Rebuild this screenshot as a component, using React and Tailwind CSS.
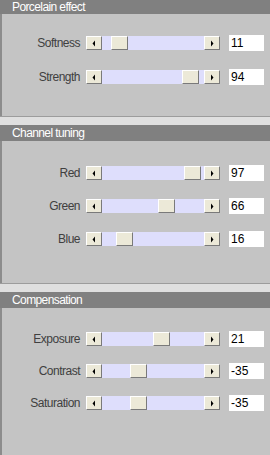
import React from "react";

const sections = [
  {
    title: "Porcelain effect",
    first: true,
    pad: "pt-[22px] gap-[20px] h-[102px]",
    rows: [
      { label: "Softness", value: 11, min: 0, max: 100 },
      { label: "Strength", value: 94, min: 0, max: 100 },
    ],
  },
  {
    title: "Channel tuning",
    pad: "pt-[25px] gap-[19px] h-[142px]",
    rows: [
      { label: "Red", value: 97, min: 0, max: 100 },
      { label: "Green", value: 66, min: 0, max: 100 },
      { label: "Blue", value: 16, min: 0, max: 100 },
    ],
  },
  {
    title: "Compensation",
    pad: "pt-[24px] gap-[18px] flex-1",
    rows: [
      { label: "Exposure", value: 21, min: -100, max: 100 },
      { label: "Contrast", value: -35, min: -100, max: 100 },
      { label: "Saturation", value: -35, min: -100, max: 100 },
    ],
  },
];

function ArrowButton({ dir }) {
  return (
    <div className="flex h-[14px] w-[16px] shrink-0 items-center justify-center border border-t-white border-l-white border-b-[#7a7a7a] border-r-[#7a7a7a] bg-[#ece9d8]">
      <svg width="4" height="7" viewBox="0 0 4 7">
        {dir === "left" ? (
          <path d="M3 0.5 L0.5 3.5 L3 6.5 Z" fill="#000" />
        ) : (
          <path d="M1 0.5 L3.5 3.5 L1 6.5 Z" fill="#000" />
        )}
      </svg>
    </div>
  );
}

function Slider({ value, min, max }) {
  const frac = (value - min) / (max - min);
  return (
    <div className="flex h-[14px] w-[134px] items-center">
      <ArrowButton dir="left" />
      <div className="relative h-[14px] flex-1 bg-[#dedefc]">
        <div
          className="absolute top-0 h-[14px] w-[17px] border border-t-white border-l-white border-b-[#7a7a7a] border-r-[#7a7a7a] bg-[#ece9d8]"
          style={{ left: Math.round(85 * frac) }}
        />
      </div>
      <ArrowButton dir="right" />
    </div>
  );
}

function Row({ label, value, min, max }) {
  return (
    <div className="flex h-[14px] items-center">
      <div className="w-[78px] text-right text-[12px] leading-[14px] tracking-[-0.5px] text-[#404040]">{label}</div>
      <div className="ml-[6px]">
        <Slider value={value} min={min} max={max} />
      </div>
      <div className="ml-[9px] flex h-[16px] w-[35px] items-center bg-white pl-[2px] text-[12px] leading-[16px] text-black">
        {value}
      </div>
    </div>
  );
}

export default function App() {
  return (
    <div
      className="flex h-[455px] w-[270px] flex-col overflow-hidden bg-[#c4c4c4]"
      style={{ fontFamily: '"Liberation Sans", Arial, sans-serif' }}
    >
      {sections.map((s) => (
        <React.Fragment key={s.title}>
          {!s.first && <div className="h-[9px] shrink-0 border-t border-[#9c9c9c] bg-[#dfdfdf]" />}
          <div
            className={
              "flex shrink-0 items-end bg-[#808080] pl-[12px] text-[12px] tracking-[-0.6px] text-white " +
              (s.first ? "h-[14px] leading-[13px]" : "h-[16px] leading-[15px]")
            }
          >
            {s.title}
          </div>
          <div className={"flex shrink-0 flex-col border-l-2 border-[#8c8c8c] bg-[#c4c4c4] " + s.pad}>
            {s.rows.map((r) => (
              <Row key={r.label} {...r} />
            ))}
          </div>
        </React.Fragment>
      ))}
    </div>
  );
}
